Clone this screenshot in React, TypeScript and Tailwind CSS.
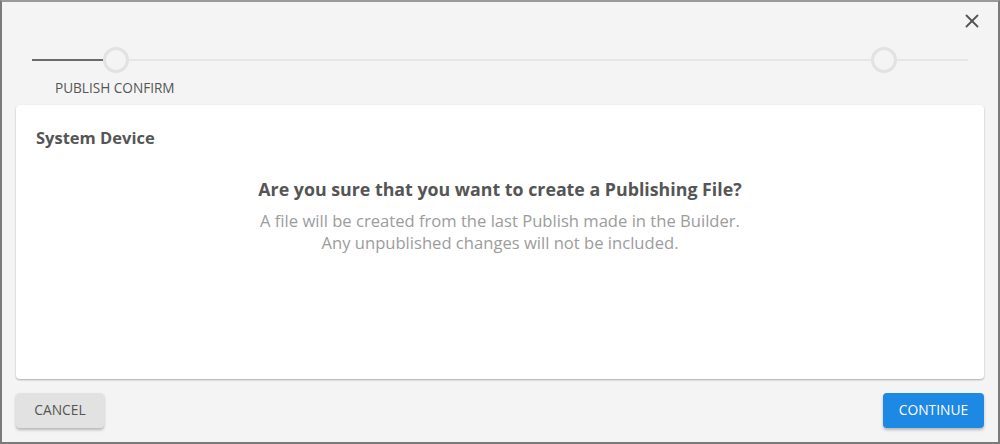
import { X } from "lucide-react";

const Step = () => (
  <div className="w-[26px] h-[26px] rounded-full border-[3px] border-[#e2e2e2] bg-[#f4f4f4] shrink-0" />
);

export default function App() {
  return (
    <div
      className="w-[1000px] h-[444px] bg-[#f4f4f4] border-2 border-[#7a7a7a] border-t-[#9a9a9a] flex flex-col"
      style={{ fontFamily: '"Open Sans", sans-serif' }}
    >
      {/* Header with stepper */}
      <div className="relative h-[103px] shrink-0">
        <button className="absolute right-[15px] top-[8px] text-[#555]">
          <X className="w-[22px] h-[22px]" strokeWidth={2} />
        </button>
        <div className="flex items-center pl-[30px] pr-[30px] pt-[45px]">
          <div className="w-[71px] h-[2px] bg-[#6b6b6b]" />
          <Step />
          <div className="flex-1 h-[2px] bg-[#e6e6e6]" />
          <Step />
          <div className="w-[71px] h-[2px] bg-[#e6e6e6]" />
        </div>
        <div className="pl-[53px] pt-[5px] text-[13.6px] text-[#555]">PUBLISH CONFIRM</div>
      </div>

      {/* Card */}
      <div className="mx-[14px] h-[274px] bg-white rounded-[4px] shadow-[0_1px_2px_rgba(0,0,0,0.3)] px-5 pt-[21px]">
        <div className="text-[16.5px] font-bold text-[#555]">System Device</div>
        <div className="mt-[25px] text-center">
          <div className="text-[17.8px] font-bold text-[#555]">Are you sure that you want to create a Publishing File?</div>
          <div className="mt-[8px] text-[16.6px] leading-[22px] text-[#9c9c9c]">
            A file will be created from the last Publish made in the Builder.
            <br />
            Any unpublished changes will not be included.
          </div>
        </div>
      </div>

      {/* Footer */}
      <div className="flex justify-between items-center px-[14px] pt-[14px]">
        <button className="h-[35px] w-[88px] rounded-[4px] bg-[#e2e2e2] text-[13.8px] text-[#555] shadow-[0_2px_3px_rgba(0,0,0,0.25)]">
          CANCEL
        </button>
        <button className="h-[35px] w-[101px] rounded-[4px] bg-[#1e88e5] text-[13.8px] text-white shadow-[0_2px_3px_rgba(0,0,0,0.25)]">
          CONTINUE
        </button>
      </div>
    </div>
  );
}
